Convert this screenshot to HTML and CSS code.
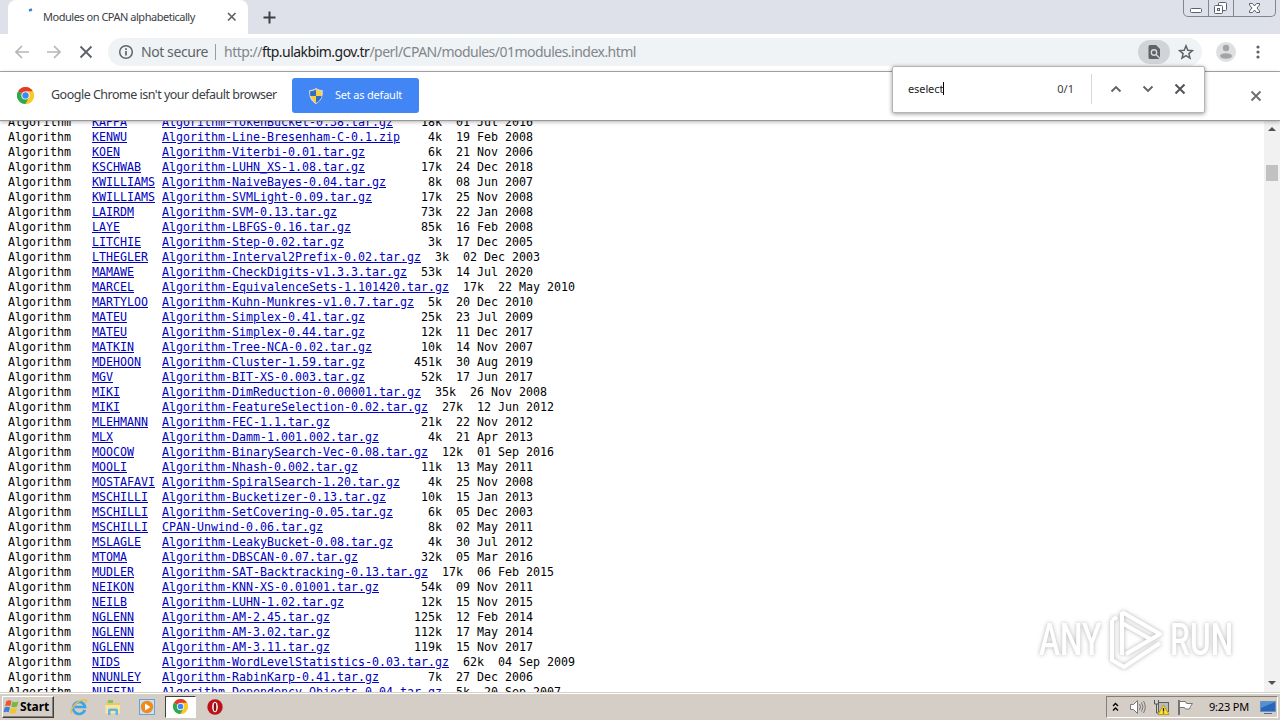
FILE: index.html
```html
<!DOCTYPE html>
<html>
	<head>
		<meta charset="utf-8">
		<title>Modules on CPAN alphabetically</title>
		<link rel="stylesheet" href="styles.css">
	</head>
	<body>
		<svg class="defs" width="0" height="0">
			<symbol id="chrome" viewBox="0 0 24 24">
				<circle cx="12" cy="12" r="12" fill="#fbc924"/>
				<path d="M12 12 1.6 6A12 12 0 0 1 22.4 6Z" fill="#e33b2e"/>
				<path d="M1.6 6 12 12l5.2 3L12 24A12 12 0 0 1 1.6 6Z" fill="#2da94f"/>
				<path d="M12 6h10.4A12 12 0 0 1 12 24l5.2-9z" fill="#fbc924"/>
				<circle cx="12" cy="12" r="5.8" fill="#fff"/>
				<circle cx="12" cy="12" r="4.5" fill="#4285f4"/>
			</symbol>
		</svg>

		<!-- tabs -->
		<div class="tabs">
			<div class="tab">
				<svg class="spin" width="16" height="16"><path d="M6 6.500 9 5.500" stroke="#3f86c8" stroke-width="2.500"/></svg>
				<span class="tab_title">Modules on CPAN alphabetically</span>
				<svg class="tab_close" width="10" height="10"><path d="M1 1l7.500 7.500M8.500 1 1 8.500" stroke="#5f6368" stroke-width="1.700"/></svg>
			</div>
			<svg class="plus" width="13" height="13"><path d="M6.500 0.500v12M0.500 6.500h12" stroke="#3c4043" stroke-width="2"/></svg>
			<div class="win">
				<i><svg width="24" height="16"><rect x="6.500" y="8.500" width="11" height="4" rx="1" fill="#fff" stroke="#596070"/></svg></i>
				<i><svg width="24" height="16" fill="#fff" stroke="#596070"><rect x="9.500" y="2.500" width="8" height="8" rx="1"/><rect x="5.500" y="5.500" width="8" height="8" rx="1"/><rect x="8.500" y="8.500" width="2" height="2"/></svg></i>
				<i class="wide"><svg width="40" height="16"><path d="M15.500 3.500h3l2 2.500 2-2.500h3v1.500l-2.500 3 2.500 3v1.500h-3l-2-2.500-2 2.500h-3v-1.500l2.500-3-2.500-3z" fill="#fff" stroke="#596070"/></svg></i>
			</div>
		</div>

		<!-- toolbar -->
		<div class="bar">
			<div class="nav">
				<svg width="16" height="16" fill="none" stroke="#b4b6b9" stroke-width="1.700"><path d="M15 8H2M8 2 2 8l6 6"/></svg>
				<svg width="16" height="16" fill="none" stroke="#b4b6b9" stroke-width="1.700"><path d="M1 8h13M8 2l6 6-6 6"/></svg>
				<svg width="16" height="16" fill="none" stroke="#5f6368" stroke-width="1.900"><path d="M2.500 2.500l11 11M13.500 2.500l-11 11"/></svg>
			</div>
			<div class="address">
				<svg width="16" height="16"><circle cx="8" cy="8" r="6.300" fill="none" stroke="#5f6368" stroke-width="1.500"/><path d="M8 7v4.500M8 4.200v1.800" stroke="#5f6368" stroke-width="1.700"/></svg>
				<span class="secure">Not secure</span>
				<span class="url">http://<b>ftp.ulakbim.gov.tr</b>/perl/CPAN/modules/01modules.index.html</span>
				<span class="find_chip"><svg width="14" height="16"><path d="M1.500 2.500a1.500 1.500 0 0 1 1.500-1.500h6l4 4v8.500a1.500 1.500 0 0 1-1.500 1.500H3a1.500 1.500 0 0 1-1.500-1.500z" fill="#5f6368"/><circle cx="7" cy="8.500" r="2.700" fill="none" stroke="#d5d7da" stroke-width="1.400"/><path d="M9 10.500l4 4" stroke="#d5d7da" stroke-width="1.400"/></svg></span>
				<svg class="star" width="16" height="16"><path d="M8 1.800l1.800 4.400 4.700.4-3.600 3 1.100 4.600L8 11.700l-4 2.500 1.100-4.600-3.600-3 4.700-.4z" fill="none" stroke="#5f6368" stroke-width="1.500"/></svg>
			</div>
			<svg class="user" width="20" height="20"><circle cx="10" cy="10" r="10" fill="#dedfe1"/><circle cx="10" cy="6" r="3.200" fill="#a2a4a7"/><ellipse cx="10" cy="14" rx="6" ry="2.800" fill="#a2a4a7"/></svg>
			<svg class="dots" width="4" height="14" fill="#5f6368"><circle cx="2" cy="2" r="1.600"/><circle cx="2" cy="7" r="1.600"/><circle cx="2" cy="12" r="1.600"/></svg>
		</div>

		<!-- default browser -->
		<div class="info">
			<svg width="17" height="17"><use href="#chrome"/></svg>
			<span class="info_text">Google Chrome isn't your default browser</span>
			<button type="button">
				<svg width="14" height="16"><path d="M7 .5C5 2 3 2.500.8 2.500.3 9 2.500 13 7 15.500 11.500 13 13.700 9 13.200 2.500 11 2.500 9 2 7 .5z" fill="#f6cf45" stroke="#dfe5ea"/><path d="M7 1.500v6.500H1.300C1 6 1.200 5 1.300 3.300 4 3 5 2.800 7 1.500zM7 8h5.700C12 11 10 13.500 7 15z" fill="#2f6fc4"/></svg>
				<span>Set as default</span>
			</button>
			<svg class="info_close" width="12" height="12"><path d="M1.500 1.500l9 9M10.500 1.500l-9 9" stroke="#6b6f73" stroke-width="1.900"/></svg>
		</div>

		<!-- search box -->
		<div class="find">
			<span class="word">eselect</span>
			<span class="count">0/1</span>
			<div class="find_btn">
				<svg width="12" height="12"><path d="M1.500 8.500 6 4l4.500 4.500" fill="none" stroke="#5f6368" stroke-width="1.900"/></svg>
				<svg width="12" height="12"><path d="M1.500 3.500 6 8l4.500-4.500" fill="none" stroke="#5f6368" stroke-width="1.900"/></svg>
				<svg width="12" height="12"><path d="M1.500 1.500l9 9M10.500 1.500l-9 9" stroke="#505459" stroke-width="2"/></svg>
			</div>
		</div>

		<!-- page -->
		<div class="page">
<pre>
Algorithm   <a href="#">KAPPA</a>     <a href="#">Algorithm-TokenBucket-0.38.tar.gz</a>    18k  01 Jul 2016
Algorithm   <a href="#">KENWU</a>     <a href="#">Algorithm-Line-Bresenham-C-0.1.zip</a>    4k  19 Feb 2008
Algorithm   <a href="#">KOEN</a>      <a href="#">Algorithm-Viterbi-0.01.tar.gz</a>         6k  21 Nov 2006
Algorithm   <a href="#">KSCHWAB</a>   <a href="#">Algorithm-LUHN_XS-1.08.tar.gz</a>        17k  24 Dec 2018
Algorithm   <a href="#">KWILLIAMS</a> <a href="#">Algorithm-NaiveBayes-0.04.tar.gz</a>      8k  08 Jun 2007
Algorithm   <a href="#">KWILLIAMS</a> <a href="#">Algorithm-SVMLight-0.09.tar.gz</a>       17k  25 Nov 2008
Algorithm   <a href="#">LAIRDM</a>    <a href="#">Algorithm-SVM-0.13.tar.gz</a>            73k  22 Jan 2008
Algorithm   <a href="#">LAYE</a>      <a href="#">Algorithm-LBFGS-0.16.tar.gz</a>          85k  16 Feb 2008
Algorithm   <a href="#">LITCHIE</a>   <a href="#">Algorithm-Step-0.02.tar.gz</a>            3k  17 Dec 2005
Algorithm   <a href="#">LTHEGLER</a>  <a href="#">Algorithm-Interval2Prefix-0.02.tar.gz</a>  3k  02 Dec 2003
Algorithm   <a href="#">MAMAWE</a>    <a href="#">Algorithm-CheckDigits-v1.3.3.tar.gz</a>  53k  14 Jul 2020
Algorithm   <a href="#">MARCEL</a>    <a href="#">Algorithm-EquivalenceSets-1.101420.tar.gz</a>  17k  22 May 2010
Algorithm   <a href="#">MARTYLOO</a>  <a href="#">Algorithm-Kuhn-Munkres-v1.0.7.tar.gz</a>  5k  20 Dec 2010
Algorithm   <a href="#">MATEU</a>     <a href="#">Algorithm-Simplex-0.41.tar.gz</a>        25k  23 Jul 2009
Algorithm   <a href="#">MATEU</a>     <a href="#">Algorithm-Simplex-0.44.tar.gz</a>        12k  11 Dec 2017
Algorithm   <a href="#">MATKIN</a>    <a href="#">Algorithm-Tree-NCA-0.02.tar.gz</a>       10k  14 Nov 2007
Algorithm   <a href="#">MDEHOON</a>   <a href="#">Algorithm-Cluster-1.59.tar.gz</a>       451k  30 Aug 2019
Algorithm   <a href="#">MGV</a>       <a href="#">Algorithm-BIT-XS-0.003.tar.gz</a>        52k  17 Jun 2017
Algorithm   <a href="#">MIKI</a>      <a href="#">Algorithm-DimReduction-0.00001.tar.gz</a>  35k  26 Nov 2008
Algorithm   <a href="#">MIKI</a>      <a href="#">Algorithm-FeatureSelection-0.02.tar.gz</a>  27k  12 Jun 2012
Algorithm   <a href="#">MLEHMANN</a>  <a href="#">Algorithm-FEC-1.1.tar.gz</a>             21k  22 Nov 2012
Algorithm   <a href="#">MLX</a>       <a href="#">Algorithm-Damm-1.001.002.tar.gz</a>       4k  21 Apr 2013
Algorithm   <a href="#">MOOCOW</a>    <a href="#">Algorithm-BinarySearch-Vec-0.08.tar.gz</a>  12k  01 Sep 2016
Algorithm   <a href="#">MOOLI</a>     <a href="#">Algorithm-Nhash-0.002.tar.gz</a>         11k  13 May 2011
Algorithm   <a href="#">MOSTAFAVI</a> <a href="#">Algorithm-SpiralSearch-1.20.tar.gz</a>    4k  25 Nov 2008
Algorithm   <a href="#">MSCHILLI</a>  <a href="#">Algorithm-Bucketizer-0.13.tar.gz</a>     10k  15 Jan 2013
Algorithm   <a href="#">MSCHILLI</a>  <a href="#">Algorithm-SetCovering-0.05.tar.gz</a>     6k  05 Dec 2003
Algorithm   <a href="#">MSCHILLI</a>  <a href="#">CPAN-Unwind-0.06.tar.gz</a>               8k  02 May 2011
Algorithm   <a href="#">MSLAGLE</a>   <a href="#">Algorithm-LeakyBucket-0.08.tar.gz</a>     4k  30 Jul 2012
Algorithm   <a href="#">MTOMA</a>     <a href="#">Algorithm-DBSCAN-0.07.tar.gz</a>         32k  05 Mar 2016
Algorithm   <a href="#">MUDLER</a>    <a href="#">Algorithm-SAT-Backtracking-0.13.tar.gz</a>  17k  06 Feb 2015
Algorithm   <a href="#">NEIKON</a>    <a href="#">Algorithm-KNN-XS-0.01001.tar.gz</a>      54k  09 Nov 2011
Algorithm   <a href="#">NEILB</a>     <a href="#">Algorithm-LUHN-1.02.tar.gz</a>           12k  15 Nov 2015
Algorithm   <a href="#">NGLENN</a>    <a href="#">Algorithm-AM-2.45.tar.gz</a>            125k  12 Feb 2014
Algorithm   <a href="#">NGLENN</a>    <a href="#">Algorithm-AM-3.02.tar.gz</a>            112k  17 May 2014
Algorithm   <a href="#">NGLENN</a>    <a href="#">Algorithm-AM-3.11.tar.gz</a>            119k  15 Nov 2017
Algorithm   <a href="#">NIDS</a>      <a href="#">Algorithm-WordLevelStatistics-0.03.tar.gz</a>  62k  04 Sep 2009
Algorithm   <a href="#">NNUNLEY</a>   <a href="#">Algorithm-RabinKarp-0.41.tar.gz</a>       7k  27 Dec 2006
Algorithm   <a href="#">NUFFIN</a>    <a href="#">Algorithm-Dependency-Objects-0.04.tar.gz</a>  5k  20 Sep 2007
</pre>
			<div class="scroll">
				<svg width="16" height="16"><path d="M4 10l4-4 4 4z" fill="#505050"/></svg>
				<div class="thumb"></div>
				<svg class="down" width="16" height="16"><path d="M4 5l4 4 4-4z" fill="#505050"/></svg>
			</div>
			<div class="mark">
				<span class="any">ANY</span>
				<svg width="60" height="66" fill="none" stroke="#fff" stroke-width="4" stroke-linejoin="round"><path d="M16 5v43M16 5l38 22-34 20M16 16l30 17M6 13v40l12 7 36-24M6 13l5-3"/></svg>
				<span class="run">RUN</span>
			</div>
		</div>

		<!-- taskbar -->
		<div class="task">
			<div class="start">
				<svg width="17" height="16"><path d="M3.500 2C6 .8 7.500 1.500 8.500 2.200L7.200 7.200C5.500 6.300 4 6.500 2 7.300z" fill="#e8582a"/><path d="M9.500 2.500c2 1 4 1 6 0l-1.400 5c-2 .9-4 .8-5.900-.1z" fill="#78b83c"/><path d="M1.800 8.300c2-.9 3.800-.8 5.200.1L5.700 13.300C4 12.400 2.500 12.400.5 13.300z" fill="#3f80d0"/><path d="M8 8.800c2 1 4 1 5.900.1l-1.400 5c-2 1-4 .8-5.800-.2z" fill="#f5c32c"/></svg>
				<span>Start</span>
			</div>
			<div class="apps">
				<i><svg width="18" height="18"><path d="M14.800 11.800A6 6 0 1 1 15 9H5" fill="none" stroke="#3fa5e2" stroke-width="2.700"/><path d="M2 15.500C-1 13 5 4 12 2c4-1 5 1 4 3" fill="none" stroke="#e9bd4c" stroke-width="1.500"/></svg></i>
				<i><svg width="18" height="18"><path d="M2 3.500h5l1 1.500h8v10H2z" fill="#e8c867"/><path d="M4 2h5v3H4z" fill="#7fc36c"/><path d="M1.500 7h14.500v8.500H1.500z" fill="#f8e6a0"/><path d="M4 17v-5q0-1.500 1.500-1.500h7q1.500 0 1.500 1.500v5h-2.500v-4h-5v4z" fill="#64b5e4"/></svg></i>
				<i><svg width="18" height="18"><rect x="1.500" y="1.500" width="15" height="15" fill="#c9e1f2" stroke="#67a4d0"/><circle cx="9" cy="9" r="6.200" fill="#f08a1c"/><path d="M7 5.500 12.500 9 7 12.500z" fill="#fff"/></svg></i>
				<i class="on"><svg width="15" height="15"><use href="#chrome"/></svg></i>
				<i><svg width="18" height="18"><circle cx="9" cy="9" r="7.700" fill="#bd1118"/><ellipse cx="9" cy="9" rx="2.800" ry="5.300" fill="#fff"/><ellipse cx="9" cy="9" rx="1.300" ry="4.300" fill="#841015"/></svg></i>
			</div>
			<div class="tray">
				<svg class="up" width="8" height="10"><path d="M1 4l2.500-2.500L6 4M1 8.500l2.500-2.500L6 8.500" fill="none" stroke="#000" stroke-width="1.400"/></svg>
				<svg width="17" height="16" fill="none" stroke="#777"><path d="M1.500 5.500h3l4-4v13l-4-4h-3z" fill="#fff"/><path d="M10.500 5q2 3 0 6M12.500 3.500q3 4.500 0 9M14.500 2q3.500 6 0 12"/></svg>
				<svg width="17" height="16"><rect x="5.500" y="3.500" width="10" height="9" fill="#b7bbbd" stroke="#606060"/><path d="M1.500 1v4h4V1M3.500 5v9h4" fill="none" stroke="#555"/><path d="M10.500 6 16 15.500H5z" fill="#fae235" stroke="#c19b10"/><path d="M10.500 9v3.500M10.500 13.500v1" stroke="#222" stroke-width="1.300"/></svg>
				<svg width="17" height="16"><path d="M2 1v15" stroke="#707070" stroke-width="2"/><path d="M2.500 2.500h6l1 2h6l-2 3-1 2.500h-4l-1-1.500h-5z" fill="#fff" stroke="#777"/></svg>
				<span class="time">9:23 PM</span>
				<svg class="desk" width="16" height="14"><path d="M.5 1.500h15v10H.5z" fill="#2965b8" stroke="#6991bb"/><path d="M1 2h14L1 8z" fill="#5590d2"/><path d="M4 13.500h8" stroke="#4b6b90"/></svg>
			</div>
		</div>
	</body>
</html>
```
FILE: styles.css
```css
*{
	margin: 0;
	padding: 0;
	box-sizing: border-box;
}
body{
	display: flex;
	flex-direction: column;
	position: relative;
	width: 1280px;
	height: 720px;
	overflow: hidden;
	background-color: #fff;
	font-family: "Noto Sans","Open Sans",sans-serif;
	font-size: 12px;
	color: #3c4043;
}
svg{
	display: block;
	flex: none;
}
i{
	font-style: normal;
}
span{
	white-space: nowrap;
}
.defs{
	position: absolute;
}
/* 标签栏 */
.tabs{
	display: flex;
	flex: none;
	height: 34px;
	padding-left: 8px;
	background-color: #dee1e9;
}
.tab{
	display: flex;
	align-items: center;
	width: 240px;
	height: 34px;
	padding: 0 11px 0 15px;
	border-radius: 8px 8px 0 0;
	background-color: #fff;
}
.spin{
	margin-top: -10px;
}
.tab_title{
	width: 153px;
	margin-left: 4px;
	padding-bottom: 2px;
	font-size: 11px;
	letter-spacing: -0.48px;
}
.tab_close{
	margin-left: auto;
}
.plus{
	margin: 11px 0 0 15px;
}
.win{
	display: flex;
	width: 93px;
	height: 17px;
	margin-left: auto;
	margin-right: 4px;
	border: 1px solid #7f8796;
	border-top: 0;
	border-radius: 0 0 5px 5px;
}
.win i{
	width: 25px;
	border-right: 1px solid #7f8796;
}
.win .wide{
	width: 41px;
	border-right: 0;
}
/* 地址栏 */
.bar{
	display: flex;
	flex: none;
	align-items: center;
	height: 38px;
	padding: 0 20px 1px 14px;
	border-bottom: 1px solid #a9acac;
}
.nav{
	display: flex;
	gap: 16px;
}
.address{
	display: flex;
	align-items: center;
	width: 1094px;
	height: 28px;
	margin-left: 14px;
	padding: 0 8px 0 10px;
	border-radius: 14px;
	background-color: #f0f3f5;
	font-size: 14px;
}
.secure{
	width: 75px;
	margin-left: 7px;
	border-right: 1px solid #9a9da0;
	line-height: 16px;
	letter-spacing: -0.42px;
	color: #5f6368;
}
.url{
	margin-left: 8px;
	padding-bottom: 2px;
	letter-spacing: -0.52px;
	color: #80868b;
}
.url b{
	font-weight: normal;
	color: #202124;
}
.find_chip{
	display: flex;
	align-items: center;
	justify-content: center;
	width: 32px;
	height: 24px;
	margin-left: auto;
	border-radius: 12px;
	background-color: #d1d4d7;
}
.star{
	margin-left: 8px;
}
.user{
	margin-left: 14px;
}
.dots{
	margin-left: auto;
}
/* 提示栏 */
.info{
	display: flex;
	flex: none;
	align-items: center;
	position: relative;
	height: 49px;
	padding: 0 18px 1px 17px;
	border-bottom: 1px solid #999;
	box-shadow: 0 1px 4px rgba(0,0,0,.3);
	background-color: #fff;
	z-index: 1;
}
.info_text{
	width: 228px;
	margin-left: 17px;
	padding-bottom: 2px;
	font-size: 12.5px;
	letter-spacing: -0.5px;
}
.info button{
	display: flex;
	align-items: center;
	width: 127px;
	height: 35px;
	margin-left: 13px;
	padding-left: 17px;
	border: 0;
	border-radius: 3px;
	background-color: #4285f4;
	font-family: inherit;
	font-size: 11px;
	color: #fff;
}
.info button span{
	margin-left: 12px;
	padding-bottom: 2px;
	letter-spacing: -0.2px;
}
.info_close{
	margin-left: auto;
}
/* 搜索框 */
.find{
	display: flex;
	align-items: center;
	position: absolute;
	top: 66px;
	left: 892px;
	width: 313px;
	height: 47px;
	padding: 0 18px 2px 15px;
	border: 1px solid #b5b5b5;
	border-radius: 2px;
	box-shadow: 0 1px 4px rgba(0,0,0,.4);
	background-color: #fff;
	z-index: 2;
	font-size: 11px;
}
.word{
	border-right: 1px solid #000;
	line-height: 13px;
	letter-spacing: -0.1px;
	color: #222;
}
.count{
	margin-left: auto;
}
.find_btn{
	display: flex;
	align-items: center;
	gap: 20px;
	height: 30px;
	margin-left: 17px;
	padding-left: 18px;
	border-left: 1px solid #d5d7d9;
}
/* 内容 */
.page{
	display: flex;
	flex: none;
	position: relative;
	height: 571px;
	overflow: hidden;
}
pre{
	margin: -6px 0 0 8px;
	font-family: "DejaVu Sans Mono","Liberation Mono",monospace;
	font-size: 11.63px;
	line-height: 15px;
	color: #000;
}
pre a{
	color: #0000c0;
}
.scroll{
	display: flex;
	flex-direction: column;
	width: 16px;
	height: 571px;
	margin-left: auto;
	background-color: #f1f1f1;
}
.thumb{
	width: 12px;
	height: 16px;
	margin: 28px 2px 0;
	background-color: #c1c1c1;
}
.down{
	margin-top: auto;
}
/* 水印 */
.mark{
	display: flex;
	align-items: center;
	position: absolute;
	top: 486px;
	left: 1039px;
	width: 198px;
	height: 66px;
	font-family: Roboto,sans-serif;
	font-size: 44px;
	font-weight: 500;
	color: #fff;
	filter: drop-shadow(0 0 2px rgba(0,0,0,.3));
}
.mark svg{
	margin: 0 4px;
}
.any,.run{
	display: block;
	width: 63px;
	transform: scaleX(.72);
	transform-origin: 0 50%;
}
/* 任务栏 */
.task{
	display: flex;
	flex: none;
	align-items: center;
	height: 28px;
	padding: 0 2px 0;
	border-top: 1px solid #d5d0c8;
	box-shadow: inset 0 1px #fff;
	background-color: #d5cec7;
	color: #000;
}
.start{
	display: flex;
	align-items: center;
	width: 52px;
	height: 22px;
	border: 1px solid #fff;
	border-right-color: #404040;
	border-bottom-color: #404040;
	box-shadow: inset -1px -1px #857f79;
	font-size: 12px;
	font-weight: bold;
	letter-spacing: -0.1px;
}
.apps{
	display: flex;
	margin-left: 9px;
}
.apps i{
	display: flex;
	align-items: center;
	justify-content: center;
	width: 31px;
	height: 22px;
	margin-right: 3px;
}
.apps .on{
	border: 1px solid #fff;
	border-top-color: #404040;
	border-left-color: #404040;
	background-color: #fff;
}
.tray{
	display: flex;
	align-items: center;
	width: 172px;
	height: 22px;
	margin-left: auto;
	padding: 0 1px 0 5px;
	border: 1px solid #857f79;
	border-right-color: #fff;
	border-bottom-color: #fff;
}
.up{
	margin-right: 9px;
}
.tray svg + svg{
	margin-right: 7px;
}
.time{
	margin-left: 8px;
	font-size: 11px;
	letter-spacing: -0.2px;
}
.tray .desk{
	margin-left: auto;
}
```
